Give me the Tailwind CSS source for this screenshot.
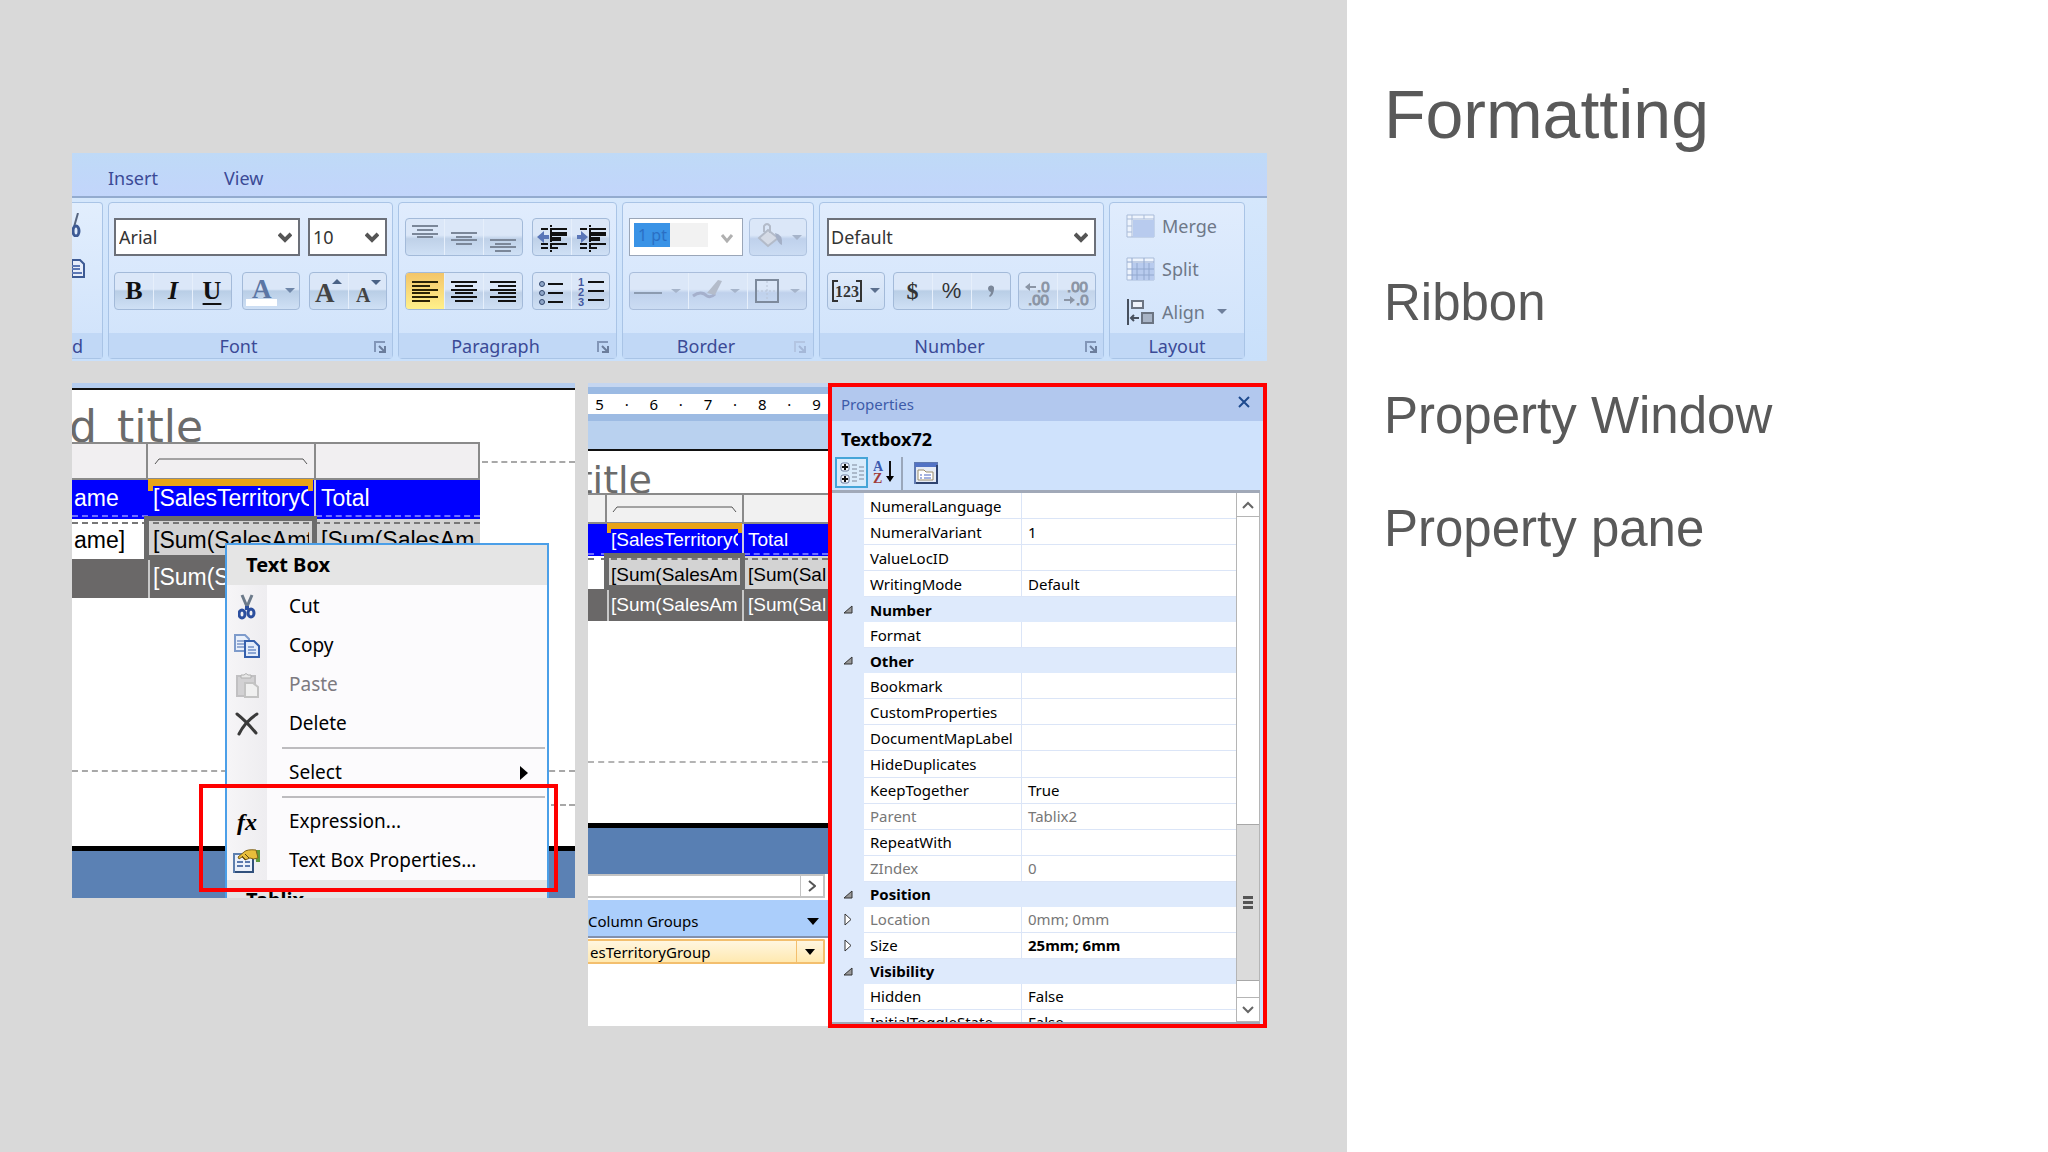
<!DOCTYPE html>
<html lang="en">
<head>
  <meta charset="UTF-8" />
  <meta name="viewport" content="width=device-width, initial-scale=1.0"/>
  <title>Formatting</title>
  <script src="https://cdn.jsdelivr.net/npm/@tailwindcss/browser@4"></script>
</head>
<body class="bg-white font-['Noto_Sans','Open_Sans',sans-serif] text-black">

<div class="flex min-h-screen">

  <!-- Left side: screenshots -->
  <main class="w-[65.77%] shrink-0 bg-[#d9d9d9] pt-[153px] pl-[72px] pr-[80px] overflow-hidden">

    <!-- Ribbon -->
    <section class="h-[208px] flex flex-col overflow-hidden text-lg text-[#3b4a96] bg-[#dbe9fc]">
      <nav class="h-[45px] shrink-0 flex items-center gap-[66px] pl-[36px] pt-[6px] bg-linear-to-b from-[#bfdaf7] to-[#c2d5fb] border-b-2 border-[#93abcf]">
        <button>Insert</button>
        <button>View</button>
      </nav>

      <div class="flex flex-1 gap-[5px] pt-[4px] pb-[2px] bg-linear-to-b from-[#d5e7fc] to-[#c9e0fb]">

        <!-- Clipboard, cut off on the left -->
        <div class="w-[31px] flex flex-col justify-between border border-l-0 border-[#a9c4e6] rounded-r-[4px] bg-linear-to-b from-[#e2eefd] to-[#cfe2fb]">
          <div class="flex flex-col gap-[22px] pt-[10px]">
            <svg width="14" height="24" viewBox="0 0 14 24" fill="none"><path d="M6 0 2 14" stroke="#56657f" stroke-width="2"/><ellipse cx="4" cy="18" rx="3" ry="5" stroke="#3d5a94" stroke-width="3"/></svg>
            <svg width="14" height="20" viewBox="0 0 14 20"><path d="M0 1h8l4 4v13H0z" fill="#e8eefb" stroke="#3d5a94" stroke-width="2"/><path d="M0 7h8M0 10h8M0 14h10" stroke="#5d78b4" stroke-width="2"/></svg>
          </div>
          <div class="h-[25px] leading-[27px] bg-[#c1d8f6]">d</div>
        </div>

        <!-- Font -->
        <div class="w-[285px] flex flex-col justify-between border border-[#a9c4e6] rounded-[4px] bg-linear-to-b from-[#e0ecfd] to-[#d0e3fb]">
          <div class="flex flex-col gap-[16px] px-[5px] pt-[15px]">
            <div class="flex justify-between">
              <label class="relative w-[186px]">
                <select aria-label="Font family" class="appearance-none block w-full h-[38px] pl-[3px] bg-white border-2 border-[#6c7079] text-[#333]"><option>Arial</option></select>
                <svg class="absolute right-[8px] top-[14px] pointer-events-none" width="14" height="12" viewBox="0 0 14 12"><path d="M1 2l6 6 6-6" fill="none" stroke="#555" stroke-width="4"/></svg>
              </label>
              <label class="relative w-[79px]">
                <select aria-label="Font size" class="appearance-none block w-full h-[38px] pl-[3px] bg-white border-2 border-[#6c7079] text-[#333]"><option>10</option></select>
                <svg class="absolute right-[8px] top-[14px] pointer-events-none" width="14" height="12" viewBox="0 0 14 12"><path d="M1 2l6 6 6-6" fill="none" stroke="#555" stroke-width="4"/></svg>
              </label>
            </div>
            <div class="flex justify-between font-['Liberation_Serif',serif] font-bold text-[#111] text-[26px] leading-[34px]">
              <div class="flex h-[38px] w-[118px] border border-[#a3bad9] rounded-[4px] divide-x divide-[#e6effb] bg-[linear-gradient(#dbe7f8_45%,#b9cee6_50%,#cfe0f5)]">
                <button class="flex-1">B</button>
                <button class="flex-1 italic">I</button>
                <button class="flex-1 underline decoration-2 underline-offset-4">U</button>
              </div>
              <button aria-label="Font color" class="h-[38px] w-[58px] border border-[#a3bad9] rounded-[4px] bg-[linear-gradient(#dbe7f8_45%,#b9cee6_50%,#cfe0f5)]">
                <svg width="56" height="36" viewBox="0 0 56 36"><text x="9" y="25" font-family="Liberation Serif" font-weight="bold" font-size="27" fill="#5b76a4">A</text><path d="M3 26h31v7H3z" fill="#fff"/><path d="M42 15h10l-5 5z" fill="#6f86a8"/></svg>
              </button>
              <div class="flex h-[38px] w-[78px] border border-[#a3bad9] rounded-[4px] divide-x divide-[#e6effb] bg-[linear-gradient(#dbe7f8_45%,#b9cee6_50%,#cfe0f5)]">
                <button aria-label="Grow font" class="flex-1"><svg width="38" height="36" viewBox="0 0 38 36"><text x="5" y="29" font-family="Liberation Serif" font-weight="bold" font-size="27" fill="#444">A</text><path d="M22 11h10l-5-5z" fill="#4a6285"/></svg></button>
                <button aria-label="Shrink font" class="flex-1"><svg width="38" height="36" viewBox="0 0 38 36"><text x="7" y="29" font-family="Liberation Serif" font-weight="bold" font-size="20" fill="#444">A</text><path d="M22 7h10l-5 5z" fill="#4a6285"/></svg></button>
              </div>
            </div>
          </div>
          <div class="relative h-[25px] leading-[27px] pr-[24px] text-center bg-[#c1d8f6]">Font
            <svg class="absolute right-[5px] top-[8px]" width="13" height="13" viewBox="0 0 13 13" fill="none"><path d="M1 11V1h10" stroke="#8296b8" stroke-width="2"/><path d="M5 5l5 5M11 5v6H5" stroke="#6b7d9c" stroke-width="2"/></svg>
          </div>
        </div>

        <!-- Paragraph -->
        <div class="w-[219px] flex flex-col justify-between border border-[#a9c4e6] rounded-[4px] bg-linear-to-b from-[#e0ecfd] to-[#d0e3fb]">
          <div class="flex flex-col gap-[16px] px-[6px] pt-[15px]">
            <div class="flex justify-between">
              <div class="flex h-[38px] w-[118px] border border-[#a3bad9] rounded-[4px] divide-x divide-[#e6effb] bg-[linear-gradient(#dbe7f8_45%,#bfd1e8_55%,#cfe0f5)]">
                <button aria-label="Align top" class="flex-1"><svg width="38" height="36" viewBox="0 0 38 36"><path d="M6 7h26M11 11h16M6 15h26M11 18h16" stroke="#7b8799" stroke-width="2"/></svg></button>
                <button aria-label="Align middle" class="flex-1"><svg width="38" height="36" viewBox="0 0 38 36"><path d="M6 14h26M11 18h16M6 21h26M11 25h16" stroke="#7b8799" stroke-width="2"/></svg></button>
                <button aria-label="Align bottom" class="flex-1"><svg width="38" height="36" viewBox="0 0 38 36"><path d="M6 21h26M11 25h16M6 28h26M11 32h16" stroke="#7b8799" stroke-width="2"/></svg></button>
              </div>
              <div class="flex h-[38px] w-[78px] border border-[#a3bad9] rounded-[4px] divide-x divide-[#e6effb] bg-[linear-gradient(#dbe7f8_45%,#bfd1e8_55%,#cfe0f5)]">
                <button aria-label="Decrease indent" class="flex-1"><svg width="38" height="36" viewBox="0 0 38 36"><path d="M17 10h17M8 10h7M17 25h17M8 25h7M8 29h7M17 29h8" stroke="#111" stroke-width="2"/><path d="M17 15h17M17 20h11" stroke="#111" stroke-width="4"/><path d="M18 6v28" stroke="#111" stroke-width="2" stroke-dasharray="2 3"/><path d="M4 18l7-6v4h5v4h-5v4z" fill="#5a76b8"/></svg></button>
                <button aria-label="Increase indent" class="flex-1"><svg width="38" height="36" viewBox="0 0 38 36"><path d="M17 10h17M8 10h7M17 25h17M8 25h7M8 29h7M17 29h8" stroke="#111" stroke-width="2"/><path d="M17 15h17M17 20h11" stroke="#111" stroke-width="4"/><path d="M18 6v28" stroke="#111" stroke-width="2" stroke-dasharray="2 3"/><path d="M16 18l-7-6v4H5v4h4v4z" fill="#5a76b8"/></svg></button>
              </div>
            </div>
            <div class="flex justify-between">
              <div class="flex h-[38px] w-[118px] border border-[#a3bad9] rounded-[4px] divide-x divide-[#e6effb] bg-[linear-gradient(#dbe7f8_45%,#bfd1e8_55%,#cfe0f5)]">
                <button aria-label="Align left" class="flex-1 rounded-l-[3px] bg-linear-to-b from-[#f3c56a] to-[#fff08a]"><svg width="38" height="36" viewBox="0 0 38 36"><path d="M6 9h26M6 13h18M6 17h26M6 20h18M6 24h26M6 28h18" stroke="#2b2205" stroke-width="2"/></svg></button>
                <button aria-label="Align center" class="flex-1"><svg width="38" height="36" viewBox="0 0 38 36"><path d="M6 9h26M10 13h18M6 17h26M10 20h18M6 24h26M10 28h18" stroke="#111" stroke-width="2"/></svg></button>
                <button aria-label="Align right" class="flex-1"><svg width="38" height="36" viewBox="0 0 38 36"><path d="M6 9h26M14 13h18M6 17h26M14 20h18M6 24h26M14 28h18" stroke="#111" stroke-width="2"/></svg></button>
              </div>
              <div class="flex h-[38px] w-[78px] border border-[#a3bad9] rounded-[4px] divide-x divide-[#e6effb] bg-[linear-gradient(#dbe7f8_45%,#bfd1e8_55%,#cfe0f5)]">
                <button aria-label="Bullets" class="flex-1"><svg width="38" height="36" viewBox="0 0 38 36"><path d="M15 11h15M15 20h15M15 29h15" stroke="#111" stroke-width="2"/><g fill="#8fa6c8" stroke="#33486e"><circle cx="9" cy="11" r="2.500"/><circle cx="9" cy="20" r="2.500"/><circle cx="9" cy="29" r="2.500"/></g></svg></button>
                <button aria-label="Numbering" class="flex-1"><svg width="38" height="36" viewBox="0 0 38 36"><path d="M16 9h16M16 18h16M16 27h16" stroke="#111" stroke-width="2"/><g font-family="Liberation Sans" font-weight="bold" font-size="11" fill="#4459a0"><text x="6" y="13">1</text><text x="6" y="23">2</text><text x="6" y="33">3</text></g></svg></button>
              </div>
            </div>
          </div>
          <div class="relative h-[25px] leading-[27px] pr-[24px] text-center bg-[#c1d8f6]">Paragraph
            <svg class="absolute right-[6px] top-[8px]" width="13" height="13" viewBox="0 0 13 13" fill="none"><path d="M1 11V1h10" stroke="#8296b8" stroke-width="2"/><path d="M5 5l5 5M11 5v6H5" stroke="#6b7d9c" stroke-width="2"/></svg>
          </div>
        </div>

        <!-- Border -->
        <div class="w-[192px] flex flex-col justify-between border border-[#a9c4e6] rounded-[4px] bg-linear-to-b from-[#e0ecfd] to-[#d0e3fb]">
          <div class="flex flex-col gap-[16px] px-[6px] pt-[15px]">
            <div class="flex justify-between">
              <div class="flex h-[38px] w-[114px] p-[4px] border border-[#9aa6b8] bg-white">
                <input aria-label="Border width" value="1 pt" class="h-[24px] w-[36px] bg-[#3a93e6] pl-[4px] text-base text-[#2a6fc4]" />
                <div class="h-[24px] w-[38px] bg-[#f2f2f2]"></div>
                <svg class="ml-auto mr-[4px] mt-[10px]" width="14" height="12" viewBox="0 0 14 12"><path d="M2 2l5 6 5-6" fill="none" stroke="#b0b0b0" stroke-width="3"/></svg>
              </div>
              <button aria-label="Fill color" class="h-[38px] w-[58px] border border-[#b0c4e0] rounded-[4px] bg-[linear-gradient(#dbe7f8_45%,#bfd1ec_55%,#cbdcf3)]">
                <svg width="56" height="36" viewBox="0 0 56 36"><path d="M9 19l9-8 10 8-10 8z" fill="#d5dbe6" stroke="#b3bbc9" stroke-width="2"/><path d="M14 13V7q3-4 6 0v7" fill="none" stroke="#b3bbc9" stroke-width="2"/><path d="M25 14q8 1 7 12-5-2-7-12z" fill="#a3afc6"/><path d="M42 16h10l-5 5z" fill="#a6b4ca"/></svg>
              </button>
            </div>
            <div class="flex h-[38px] border border-[#a9bddb] rounded-[4px] divide-x divide-[#e6effb] bg-[linear-gradient(#dbe7f8_45%,#bfd1ec_55%,#cbdcf3)]">
              <button aria-label="Border style" class="flex-1"><svg width="58" height="36" viewBox="0 0 58 36"><path d="M4 20h28" stroke="#8c9bb0" stroke-width="2"/><path d="M41 16h10l-5 4z" fill="#a6b4ca"/></svg></button>
              <button aria-label="Border color" class="flex-1"><svg width="58" height="36" viewBox="0 0 58 36"><path d="M4 23q8-6 14 0 4 2 8-2" fill="none" stroke="#a5b0cc" stroke-width="3"/><path d="M18 20L29 7l4 1-7 14z" fill="#b4bcca"/><path d="M41 16h10l-5 4z" fill="#a6b4ca"/></svg></button>
              <button aria-label="Borders" class="flex-1"><svg width="58" height="36" viewBox="0 0 58 36"><path d="M8 7h22v22H8z" fill="none" stroke="#7d8a9c" stroke-width="2"/><path d="M19 8v20M9 18h20" stroke="#b9c4d6" stroke-dasharray="2 2"/><path d="M42 16h10l-5 4z" fill="#a6b4ca"/></svg></button>
            </div>
          </div>
          <div class="relative h-[25px] leading-[27px] pr-[24px] text-center bg-[#c1d8f6]">Border
            <svg class="absolute right-[6px] top-[8px]" width="13" height="13" viewBox="0 0 13 13" fill="none"><path d="M1 11V1h10" stroke="#b3c5e2" stroke-width="2"/><path d="M5 5l5 5M11 5v6H5" stroke="#a5b8d8" stroke-width="2"/></svg>
          </div>
        </div>

        <!-- Number -->
        <div class="w-[285px] flex flex-col justify-between border border-[#a9c4e6] rounded-[4px] bg-linear-to-b from-[#e0ecfd] to-[#d0e3fb]">
          <div class="flex flex-col gap-[16px] px-[7px] pt-[15px]">
            <label class="relative">
              <select aria-label="Number format" class="appearance-none block w-full h-[38px] pl-[2px] bg-white border-2 border-[#6c7079] text-[#333]"><option>Default</option></select>
              <svg class="absolute right-[8px] top-[14px] pointer-events-none" width="14" height="12" viewBox="0 0 14 12"><path d="M1 2l6 6 6-6" fill="none" stroke="#555" stroke-width="4"/></svg>
            </label>
            <div class="flex justify-between">
              <button aria-label="Placeholder styles" class="h-[38px] w-[58px] border border-[#a3bad9] rounded-[4px] bg-[linear-gradient(#dfeafa,#cfe0f5)]">
                <svg width="56" height="36" viewBox="0 0 56 36"><path d="M10 8H5v20h5M28 8h5v20h-5" fill="none" stroke="#333" stroke-width="2"/><text x="7" y="24" font-family="Liberation Serif" font-weight="bold" font-size="16" fill="#333">123</text><path d="M42 15h10l-5 5z" fill="#5b6f8e"/></svg>
              </button>
              <div class="flex h-[38px] w-[118px] border border-[#a3bad9] rounded-[4px] divide-x divide-[#e6effb] bg-[linear-gradient(#dbe7f8_45%,#b9cee6_50%,#cfe0f5)] text-[#333] text-[22px] leading-[36px]">
                <button class="flex-1 font-['Liberation_Serif',serif] font-bold text-[24px]">$</button>
                <button class="flex-1 font-['Liberation_Sans',sans-serif]">%</button>
                <button aria-label="Comma style" class="flex-1"><svg width="38" height="36" viewBox="0 0 38 36"><path d="M16 15a3 3 0 1 1 6 1q0 5-4 8l-1-1q2-2 2-4-3-1-3-4z" fill="#7b8799"/></svg></button>
              </div>
              <div class="flex h-[38px] w-[78px] border border-[#a3bad9] rounded-[4px] divide-x divide-[#e6effb] bg-[linear-gradient(#dbe7f8_45%,#c3d4ea_50%,#cfe0f5)]">
                <button aria-label="Increase decimals" class="flex-1"><svg width="38" height="36" viewBox="0 0 38 36"><g font-family="Liberation Sans" font-size="15" fill="#8b95a5" stroke="#8b95a5"><text x="18" y="19">.0</text><text x="9" y="32">.00</text></g><path d="M6 14l5-4v3h6v2h-6v3z" fill="#8b95a5"/></svg></button>
                <button aria-label="Decrease decimals" class="flex-1"><svg width="38" height="36" viewBox="0 0 38 36"><g font-family="Liberation Sans" font-size="15" fill="#8b95a5" stroke="#8b95a5"><text x="9" y="19">.00</text><text x="18" y="32">.0</text></g><path d="M17 27l-5-4v3H6v2h6v3z" fill="#8b95a5"/></svg></button>
              </div>
            </div>
          </div>
          <div class="relative h-[25px] leading-[27px] pr-[24px] text-center bg-[#c1d8f6]">Number
            <svg class="absolute right-[5px] top-[8px]" width="13" height="13" viewBox="0 0 13 13" fill="none"><path d="M1 11V1h10" stroke="#8296b8" stroke-width="2"/><path d="M5 5l5 5M11 5v6H5" stroke="#6b7d9c" stroke-width="2"/></svg>
          </div>
        </div>

        <!-- Layout -->
        <div class="w-[136px] flex flex-col justify-between border border-[#a9c4e6] rounded-[4px] bg-linear-to-b from-[#e0ecfd] to-[#d0e3fb]">
          <div class="flex flex-col gap-[15px] pl-[16px] pt-[9px] text-[#6e7888] leading-7">
            <button class="flex items-center gap-[7px]">
              <svg width="29" height="24" viewBox="0 0 29 24"><path d="M1 1h27v22H1z" fill="#eef4fd" stroke="#a9bbd8"/><path d="M1 5h27M6 1v22M18 1v4M1 12h5M1 18h5" stroke="#a9bbd8"/><path d="M7 6h21v17H7z" fill="#b8cbee"/></svg>Merge
            </button>
            <button class="flex items-center gap-[7px]">
              <svg width="29" height="24" viewBox="0 0 29 24"><path d="M1 1h27v22H1z" fill="#eef4fd" stroke="#a9bbd8"/><path d="M6 6h22v17H6z" fill="#b8cbee"/><path d="M1 5h27M6 1v22M18 1v22M11 6v17M23 6v17M1 12h27M1 18h27" stroke="#92a8cf"/></svg>Split
            </button>
            <button class="flex items-center gap-[7px]">
              <svg width="29" height="28" viewBox="0 0 29 28"><path d="M2 1v26" stroke="#47505e" stroke-width="2"/><path d="M6 3h11v7H6z" fill="#eef2fa" stroke="#6b7482" stroke-width="2"/><path d="M16 15h11v10H16z" fill="#a8b4c6" stroke="#6b7482" stroke-width="2"/><path d="M5 20h8M8 17l-3 3 3 3" fill="none" stroke="#47505e" stroke-width="2"/></svg>Align
              <svg width="20" height="8" viewBox="0 0 20 8"><path d="M5 1h10l-5 5z" fill="#6e7f9b"/></svg>
            </button>
          </div>
          <div class="h-[25px] leading-[27px] text-center bg-[#c1d8f6]">Layout</div>
        </div>
      </div>
    </section>

    <div class="flex items-start gap-[13px] mt-[22px]">

      <!-- Report surface with the context menu open -->
      <section class="relative w-[503px] h-[515px] shrink-0 flex flex-col bg-white overflow-hidden">
        <div class="h-[5px] shrink-0 bg-[#b5cdef]"></div>
        <div class="h-[2px] shrink-0 bg-[#111]"></div>
        <div class="h-[52px] shrink-0 w-[131px] overflow-hidden flex justify-end gap-[20px] font-['DejaVu_Sans',sans-serif] text-[44px] leading-[74px] text-[#6b6b6b]"><span>d</span><span>title</span></div>
        <div class="relative flex shrink-0">
          <table class="table-fixed w-[408px] border-separate border-spacing-0 font-['Liberation_Sans',Arial,sans-serif] text-[23px] whitespace-nowrap">
            <colgroup><col class="w-[76px]"><col class="w-[166px]"><col class="w-[166px]"></colgroup>
            <thead>
              <tr class="h-[38px] bg-[#f1eff1]">
                <td class="border-2 border-l-0 border-[#8a8a8a]"></td>
                <td class="border-y-2 border-[#8a8a8a] px-[6px]"><svg class="w-full" height="8" viewBox="0 0 154 8"><path d="M1 7l4-5h144l4 5" fill="none" stroke="#555"/></svg></td>
                <td class="border-2 border-[#8a8a8a]"></td>
              </tr>
            </thead>
            <tbody>
              <tr class="h-[39px] bg-[#0000ff] text-white align-top">
                <td class="p-0 overflow-hidden"><div class="h-[37px] pl-[2px] leading-[37px] border-b-2 border-dashed border-[#6f6fff]">ame</div></td>
                <td class="p-0 overflow-hidden"><div class="h-[37px] ml-[5px] mr-[5px] leading-[37px] overflow-hidden">[SalesTerritoryG</div></td>
                <td class="p-0 overflow-hidden border-l-2 border-[#c9c9e6]"><div class="h-[37px] pl-[5px] leading-[37px] border-b-2 border-dashed border-[#6f6fff]">Total</div></td>
              </tr>
              <tr class="h-[40px] align-top">
                <td class="p-0 pt-[3px] overflow-hidden"><div class="pl-[2px] leading-[32px] border-t-2 border-dashed border-[#777]">ame]</div></td>
                <td class="p-0 pt-[3px] overflow-hidden bg-[#d3d3d3]"><div class="ml-[5px] mr-[5px] leading-[32px] border-t-2 border-dashed border-[#777] overflow-hidden">[Sum(SalesAmt</div></td>
                <td class="p-0 pt-[3px] overflow-hidden bg-[#d3d3d3]"><div class="pl-[7px] leading-[32px] border-t-2 border-dashed border-[#777]">[Sum(SalesAm</div></td>
              </tr>
              <tr class="h-[39px] bg-[#6a6868] text-white align-top">
                <td class="p-0"></td>
                <td class="p-0 overflow-hidden border-l-2 border-[#c8c8c8]"><div class="pl-[3px] leading-[37px]">[Sum(S</div></td>
                <td class="p-0"></td>
              </tr>
            </tbody>
          </table>
          <div class="flex-1 mt-[19px] ml-[2px] h-0 border-t-2 border-dashed border-[#a8a8a8]"></div>
          <div class="absolute left-[76px] top-[37px] w-[165px] h-[12px] border-t-[7px] border-x-[5px] border-[#e8a317]"></div>
          <div class="absolute left-[72px] top-[74px] w-[173px] h-[44px] border-[5px] border-[#6b6b6b]"></div>
        </div>
        <div class="mt-[172px] shrink-0 border-t-2 border-dashed border-[#a8a8a8]"></div>
        <div class="mt-[32px] shrink-0 ml-auto w-[24px] border-t-2 border-dashed border-[#a8a8a8]"></div>
        <div class="mt-auto shrink-0 h-[52px] border-t-[5px] border-black bg-[#5b81b4]"></div>

        <div class="absolute left-[153px] top-[160px] w-[324px] bg-[#fcfbfd] border-2 border-[#4b9fe8] text-[19px]">
          <div class="h-[40px] leading-[40px] pl-[19px] bg-[#e5e5e5] font-bold text-xl/10">Text Box</div>
          <div class="pt-[2px] bg-[linear-gradient(90deg,#f6f5f7,#eeedf0)] bg-[length:40px_100%] bg-no-repeat">
            <button class="flex items-center w-full h-[39px]">
              <span class="w-[40px] flex justify-center"><svg width="18" height="26" viewBox="0 0 18 26" fill="none"><path d="M4 1l6 14M14 1L8 15" stroke="#6c7a8a" stroke-width="3"/><ellipse cx="4" cy="20" rx="3" ry="4" stroke="#2c4f9e" stroke-width="3"/><ellipse cx="13" cy="19" rx="3" ry="4" stroke="#2c4f9e" stroke-width="3"/><path d="M9 12v4" stroke="#2c4f9e" stroke-width="4"/></svg></span>
              <span class="pl-[22px]">Cut</span>
            </button>
            <button class="flex items-center w-full h-[39px]">
              <span class="w-[40px] flex justify-center"><svg width="26" height="24" viewBox="0 0 26 24"><path d="M1 1h10l4 4v12H1z" fill="#e9f0fb" stroke="#7e9bcb" stroke-width="2"/><path d="M3 7h7M3 10h7M3 13h7" stroke="#4469ad" stroke-width="1"/><path d="M11 7h9l5 5v11H11z" fill="#e3ecfb" stroke="#3560ad" stroke-width="2"/><path d="M14 13h6M14 16h8M14 19h8" stroke="#3560ad" stroke-width="1"/></svg></span>
              <span class="pl-[22px]">Copy</span>
            </button>
            <button class="flex items-center w-full h-[39px] text-[#7d7a80]">
              <span class="w-[40px] flex justify-center"><svg width="24" height="26" viewBox="0 0 24 26"><path d="M2 4h18v20H2z" fill="#d2d1d3" stroke="#c1c0c2" stroke-width="2"/><path d="M6 6V3h3q2-3 4 0h3v3z" fill="#e8e8e8" stroke="#b0b0b0"/><path d="M10 11h8l5 4v10H10z" fill="#f0f0f0" stroke="#c3c3c3" stroke-width="2"/></svg></span>
              <span class="pl-[22px]">Paste</span>
            </button>
            <button class="flex items-center w-full h-[39px]">
              <span class="w-[40px] flex justify-center"><svg width="24" height="24" viewBox="0 0 24 24" fill="none" stroke="#3a3a3a" stroke-linecap="round"><path d="M2 2q9 7 19 19" stroke-width="3"/><path d="M22 2Q10 10 4 22" stroke-width="3"/></svg></span>
              <span class="pl-[22px]">Delete</span>
            </button>
            <hr class="my-[4px] ml-[55px] mr-[2px] border-t-2 border-[#bdbcbf]" />
            <button class="flex items-center w-full h-[39px]">
              <span class="w-[40px]"></span>
              <span class="pl-[22px]">Select</span>
              <svg class="ml-auto mr-[19px]" width="8" height="14" viewBox="0 0 8 14"><path d="M0 0l8 7-8 7z"/></svg>
            </button>
            <hr class="my-[4px] ml-[55px] mr-[2px] border-t-2 border-[#bdbcbf]" />
            <button class="flex items-center w-full h-[39px]">
              <span class="w-[40px] text-center font-['Liberation_Serif',serif] font-bold italic text-2xl leading-6">fx</span>
              <span class="pl-[22px]">Expression...</span>
            </button>
            <button class="flex items-center w-full h-[39px]">
              <span class="w-[40px] flex justify-center"><svg width="28" height="26" viewBox="0 0 28 26"><path d="M1 6h19v18H1z" fill="#eaf0fa" stroke="#5d7fae" stroke-width="2"/><path d="M20 8v16H2" fill="none" stroke="#31507c" stroke-width="2"/><path d="M4 14h6M12 14h5M4 18h6M12 18h5" stroke="#5a78ad" stroke-width="2"/><path d="M22 2h5v12h-4z" fill="#5f9a3c"/><path d="M5 9l6-5q3-3 12-2l2 8q-5 2-8 0l-5 2-3-3-3 2z" fill="#e8be3a" stroke="#7d611a"/><path d="M9 8l4 4M12 6l4 4" stroke="#5c4612"/></svg></span>
              <span class="pl-[22px]">Text Box Properties...</span>
            </button>
          </div>
          <div class="h-[40px] pl-[19px] bg-[#e5e5e5] font-bold text-xl/10">Tablix</div>
        </div>
        <div class="absolute left-[127px] top-[401px] w-[359px] h-[108px] border-4 border-[#ff0000]"></div>
      </section>

      <!-- Report surface with the properties pane -->
      <section class="flex flex-1 items-start">
        <div class="w-[240px] h-[643px] shrink-0 flex flex-col bg-white overflow-hidden text-[15px]">
          <div class="h-[11px] shrink-0 border-t-4 border-[#c5d6f0] bg-[#9bbae3]"></div>
          <div class="h-[20px] shrink-0 flex -ml-[2px] -mr-[2px] leading-5 text-center">
            <span class="flex-1">5</span><span class="flex-1">·</span><span class="flex-1">6</span><span class="flex-1">·</span><span class="flex-1">7</span><span class="flex-1">·</span><span class="flex-1">8</span><span class="flex-1">·</span><span class="flex-1">9</span>
          </div>
          <div class="h-[35px] shrink-0 border-t-[7px] border-[#9dbbe3] bg-[#b9d1ef]"></div>
          <div class="h-[2px] shrink-0 bg-[#111]"></div>
          <div class="h-[42px] shrink-0 w-[64px] overflow-hidden flex justify-end font-['DejaVu_Sans',sans-serif] text-[38px] leading-[58px] text-[#6b6b6b]">title</div>
          <div class="relative shrink-0">
            <table class="table-fixed w-full border-separate border-spacing-0 font-['Liberation_Sans',Arial,sans-serif] text-[19px] whitespace-nowrap">
              <colgroup><col class="w-[19px]"><col class="w-[135px]"><col></colgroup>
              <thead>
                <tr class="h-[31px] bg-[#f1f1f1]">
                  <td class="border-2 border-l-0 border-[#8a8a8a]"></td>
                  <td class="border-y-2 border-[#8a8a8a] px-[5px]"><svg class="w-full" height="8" viewBox="0 0 125 8"><path d="M1 7l4-5h115l4 5" fill="none" stroke="#555"/></svg></td>
                  <td class="border-2 border-r-0 border-[#8a8a8a]"></td>
                </tr>
              </thead>
              <tbody>
                <tr class="h-[32px] bg-[#0000ff] text-white align-top">
                  <td class="p-0"><div class="h-[31px] border-b-2 border-dashed border-[#6f6fff]"></div></td>
                  <td class="p-0 overflow-hidden"><div class="h-[30px] ml-[4px] mr-[4px] leading-[31px] overflow-hidden">[SalesTerritoryG</div></td>
                  <td class="p-0 overflow-hidden border-l-2 border-[#c9c9e6]"><div class="h-[31px] pl-[4px] leading-[31px] border-b-2 border-dashed border-[#6f6fff]">Total</div></td>
                </tr>
                <tr class="h-[33px] align-top">
                  <td class="p-0 pt-[2px]"><div class="border-t-2 border-dashed border-[#777]"></div></td>
                  <td class="p-0 pt-[2px] overflow-hidden bg-[#d3d3d3]"><div class="ml-[4px] mr-[4px] leading-[29px] border-t-2 border-dashed border-[#777] overflow-hidden">[Sum(SalesAmt</div></td>
                  <td class="p-0 pt-[2px] overflow-hidden bg-[#d3d3d3]"><div class="pl-[6px] leading-[29px] border-t-2 border-dashed border-[#777]">[Sum(Sal</div></td>
                </tr>
                <tr class="h-[32px] bg-[#6a6868] text-white align-top">
                  <td class="p-0"></td>
                  <td class="p-0 overflow-hidden border-l-2 border-[#c8c8c8]"><div class="ml-[2px] mr-[4px] leading-[31px] overflow-hidden">[Sum(SalesAmt</div></td>
                  <td class="p-0 overflow-hidden border-l-2 border-[#c8c8c8]"><div class="pl-[4px] leading-[31px]">[Sum(Sal</div></td>
                </tr>
              </tbody>
            </table>
            <div class="absolute left-[19px] top-[30px] w-[135px] h-[10px] border-t-[6px] border-x-4 border-[#e8a317]"></div>
            <div class="absolute left-[16px] top-[60px] w-[141px] h-[37px] border-[5px] border-[#6b6b6b]"></div>
          </div>
          <div class="mt-[140px] shrink-0 border-t-2 border-dashed border-[#b4b4b4]"></div>
          <div class="mt-[60px] shrink-0 h-[51px] border-t-[5px] border-black bg-[#587fb3]"></div>
          <div class="h-[24px] shrink-0 mr-[3px] flex justify-end border-2 border-l-0 border-[#c3c3c3]">
            <button aria-label="Scroll right" class="w-[23px] flex items-center justify-center border-l border-[#c3c3c3]"><svg width="8" height="12" viewBox="0 0 8 12"><path d="M1 1l6 5-6 5" fill="none" stroke="#555" stroke-width="2"/></svg></button>
          </div>
          <div class="h-[38px] mt-[2px] shrink-0 flex items-center justify-between pt-[6px] pr-[9px] bg-[#abcefb] border-b-2 border-[#8291ad]">
            <span>Column Groups</span>
            <svg width="12" height="7" viewBox="0 0 12 7"><path d="M0 0h12L6 7z"/></svg>
          </div>
          <button class="h-[25px] mt-[1px] mr-[3px] shrink-0 flex items-center border-2 border-l-0 border-[#f3bf6e] rounded-r-[2px] bg-linear-to-b from-[#fff6e0] to-[#ffe9b0]">
            <span class="flex-1 pl-[2px] text-left leading-5">esTerritoryGroup</span>
            <span class="w-[27px] h-full flex items-center justify-center border-l border-[#f3bf6e]"><svg width="10" height="6" viewBox="0 0 10 6"><path d="M0 0h10L5 6z"/></svg></span>
          </button>
        </div>

        <!-- Properties pane -->
        <div class="flex-1 h-[645px] flex flex-col border-4 border-[#ff0000] bg-[#cfe2fc] text-[15px] overflow-hidden">
          <div class="h-[34px] shrink-0 flex items-center justify-between pl-[9px] pr-[13px] bg-[#b2c8ee] text-[#3d5ba9]">
            <span>Properties</span>
            <button aria-label="Close" class="pb-[4px]"><svg width="12" height="12" viewBox="0 0 12 12"><path d="M1 1l10 10M11 1L1 11" stroke="#1d4a8e" stroke-width="2"/></svg></button>
          </div>
          <div class="h-[36px] shrink-0 leading-[36px] pl-[9px] font-bold text-lg">Textbox72</div>
          <div class="h-[33px] shrink-0 flex items-start pl-[3px]">
            <button aria-label="Categorized" class="w-[33px] h-[31px] border-2 border-[#45a5d8] bg-[#d9ebfb]">
              <svg width="29" height="27" viewBox="0 0 29 27"><g fill="#f4f7fc" stroke="#6a7da0"><rect x="4" y="4" width="8" height="8" rx="2"/><rect x="4" y="16" width="8" height="8" rx="2"/></g><path d="M5 8h6M8 5v6M5 20h6M8 17v6" stroke="#111" stroke-width="2"/><path d="M15 6h5M15 10h5M15 14h5M15 18h5M15 22h5M22 8h5M22 12h5M22 16h5M22 20h5" stroke="#7c8799"/></svg>
            </button>
            <button aria-label="Alphabetical" class="ml-[5px] mt-[2px]"><svg width="22" height="26" viewBox="0 0 22 26"><g font-family="Liberation Serif" font-weight="bold" font-size="14"><text x="0" y="12" fill="#3c5bb0">A</text><text x="0" y="24" fill="#a03a3a">Z</text></g><path d="M17 2v18" stroke="#111" stroke-width="2"/><path d="M13 17h8l-4 6z"/></svg></button>
            <div class="ml-[6px] h-[33px] border-l-2 border-[#9aa7bb]"></div>
            <button aria-label="Property pages" class="ml-[11px] mt-[5px]"><svg width="24" height="22" viewBox="0 0 24 22"><path d="M1 1h22v20H1z" fill="#e6ebf5" stroke="#5f79b0" stroke-width="2"/><path d="M1 1h22v4H1z" fill="#5272c4"/><path d="M23 3v18H2" fill="none" stroke="#30446f" stroke-width="2"/><path d="M4 8h6l2 2h7v8H4z" fill="#fff" stroke="#9a8d6c"/><path d="M6 13h2M10 13h7M6 16h2M10 16h7" stroke="#4a66c0"/></svg></button>
          </div>
          <div class="flex flex-1 min-h-0 mr-[3px] border-t-[3px] border-b-2 border-[#a1a9b8]">
            <div class="flex-1 overflow-hidden">
              <table class="table-fixed w-full h-[543px] border-separate border-spacing-0 leading-5">
                <colgroup><col class="w-[32px]"><col class="w-[158px]"><col></colgroup>
                <tbody id="propertyRows"></tbody>
              </table>
            </div>
            <div class="w-[24px] shrink-0 flex flex-col bg-white border-x border-[#b5b5b5]">
              <button aria-label="Scroll up" class="h-[24px] shrink-0 flex items-center justify-center border-b border-[#b5b5b5]"><svg width="12" height="8" viewBox="0 0 12 8"><path d="M1 7l5-5 5 5" fill="none" stroke="#666" stroke-width="2"/></svg></button>
              <div class="flex-1"></div>
              <div class="h-[157px] shrink-0 flex flex-col items-center justify-center gap-[2px] bg-[#dbdbdb] border-y border-[#a8a8a8]">
                <div class="w-[10px] h-[3px] bg-[#555]"></div>
                <div class="w-[10px] h-[3px] bg-[#555]"></div>
                <div class="w-[10px] h-[3px] bg-[#555]"></div>
              </div>
              <div class="h-[16px] shrink-0"></div>
              <button aria-label="Scroll down" class="h-[25px] shrink-0 flex items-center justify-center border-y border-[#b5b5b5]"><svg width="12" height="8" viewBox="0 0 12 8"><path d="M1 1l5 5 5-5" fill="none" stroke="#666" stroke-width="2"/></svg></button>
            </div>
          </div>
        </div>
      </section>
    </div>
  </main>

  <!-- Right side: slide text -->
  <aside class="flex-1 pl-[37px] pt-[74px] font-['Liberation_Sans',Arial,sans-serif] text-[#595959]">
    <h1 class="text-[68px] leading-[80px]">Formatting</h1>
    <ul class="mt-[92px] text-[51px] leading-[113px]">
      <li>Ribbon</li>
      <li>Property Window</li>
      <li>Property pane</li>
    </ul>
  </aside>
</div>

<script>
// [name, value, kind]
const rows = [
  ["NumeralLanguage", ""],
  ["NumeralVariant", "1"],
  ["ValueLocID", ""],
  ["WritingMode", "Default"],
  ["Number", "", "group"],
  ["Format", ""],
  ["Other", "", "group"],
  ["Bookmark", ""],
  ["CustomProperties", ""],
  ["DocumentMapLabel", ""],
  ["HideDuplicates", ""],
  ["KeepTogether", "True"],
  ["Parent", "Tablix2", "readonly"],
  ["RepeatWith", ""],
  ["ZIndex", "0", "readonly"],
  ["Position", "", "group"],
  ["Location", "0mm; 0mm", "readonly expand"],
  ["Size", "25mm; 6mm", "changed expand"],
  ["Visibility", "", "group"],
  ["Hidden", "False"],
  ["InitialToggleState", "False"],
];

const openMark = `<svg class="mx-auto" width="10" height="9" viewBox="0 0 10 9"><path d="M1 8h8V1z" fill="#999" stroke="#333"/></svg>`;
const closedMark = `<svg class="mx-auto" width="8" height="13" viewBox="0 0 8 13"><path d="M1 1l6 5.500-6 5.500z" fill="#fff" stroke="#333"/></svg>`;

let html = "";
for (const [name, value, kind = ""] of rows) {
  if (kind === "group") {
    html += `<tr class="bg-[#deeafc]"><td class="p-0">${openMark}</td><th colspan="2" class="p-0 pl-[6px] text-left font-bold">${name}</th></tr>`;
    continue;
  }
  const color = kind.includes("readonly") ? "text-[#777]" : "text-black";
  const weight = kind.includes("changed") ? "font-bold" : "font-normal";
  html += `<tr class="bg-white ${color}">`;
  html += `<td class="p-0 bg-[#deeafc]">${kind.includes("expand") ? closedMark : ""}</td>`;
  html += `<td class="p-0 pl-[6px] border-b border-r border-[#dbe5f7]">${name}</td>`;
  html += `<td class="p-0 pl-[6px] border-b border-[#dbe5f7] ${weight}">${value}</td></tr>`;
}
document.getElementById("propertyRows").innerHTML = html;
</script>

</body>
</html>
